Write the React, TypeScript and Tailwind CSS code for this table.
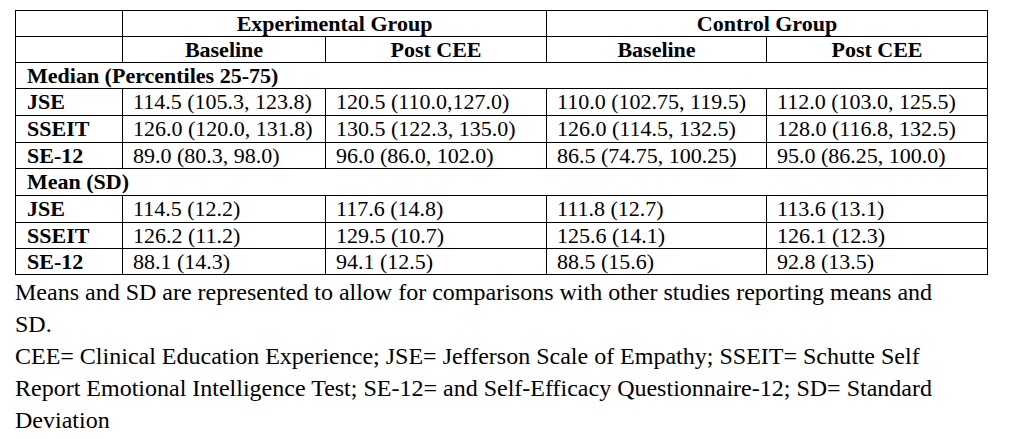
import React from "react";

const medianRows = [
  ["JSE", "114.5 (105.3, 123.8)", "120.5 (110.0,127.0)", "110.0 (102.75, 119.5)", "112.0 (103.0, 125.5)"],
  ["SSEIT", "126.0 (120.0, 131.8)", "130.5 (122.3, 135.0)", "126.0 (114.5, 132.5)", "128.0 (116.8, 132.5)"],
  ["SE-12", "89.0 (80.3, 98.0)", "96.0 (86.0, 102.0)", "86.5 (74.75, 100.25)", "95.0 (86.25, 100.0)"],
];
const meanRows = [
  ["JSE", "114.5 (12.2)", "117.6 (14.8)", "111.8 (12.7)", "113.6 (13.1)"],
  ["SSEIT", "126.2 (11.2)", "129.5 (10.7)", "125.6 (14.1)", "126.1 (12.3)"],
  ["SE-12", "88.1 (14.3)", "94.1 (12.5)", "88.5 (15.6)", "92.8 (13.5)"],
];

function DataRow({ r, h }: { r: string[]; h: string }) {
  return (
    <tr className={h}>
      <td className="border border-black pl-[11px] font-bold leading-none">{r[0]}</td>
      {r.slice(1).map((c, i) => (
        <td key={i} className="border border-black pl-[10px] leading-none whitespace-nowrap">
          {c}
        </td>
      ))}
    </tr>
  );
}

const medianHeights = ["h-[27px]", "h-[27px]", "h-[26px]"];
const meanHeights = ["h-[27px]", "h-[26px]", "h-[26px]"];

export default function App() {
  return (
    <div className="w-[1009px] h-[439px] bg-white text-black overflow-hidden font-['Liberation_Serif']">
      <div className="pt-[10px] pl-[15px]">
        <table className="border-collapse text-[22px] table-fixed w-[972px]">
          <colgroup>
            <col className="w-[107px]" />
            <col className="w-[203px]" />
            <col className="w-[221px]" />
            <col className="w-[220px]" />
            <col className="w-[221px]" />
          </colgroup>
          <tbody>
            <tr className="h-[26px]">
              <td className="border border-black"></td>
              <td colSpan={2} className="border border-black text-center font-bold leading-none">
                Experimental Group
              </td>
              <td colSpan={2} className="border border-black text-center font-bold leading-none">
                Control Group
              </td>
            </tr>
            <tr className="h-[26px]">
              <td className="border border-black"></td>
              <td className="border border-black text-center font-bold leading-none">Baseline</td>
              <td className="border border-black text-center font-bold leading-none">Post CEE</td>
              <td className="border border-black text-center font-bold leading-none">Baseline</td>
              <td className="border border-black text-center font-bold leading-none">Post CEE</td>
            </tr>
            <tr className="h-[26px]">
              <td colSpan={5} className="border border-black pl-[11px] font-bold leading-none">
                Median (Percentiles 25-75)
              </td>
            </tr>
            {medianRows.map((r, i) => (
              <DataRow key={i} r={r} h={medianHeights[i]} />
            ))}
            <tr className="h-[27px]">
              <td colSpan={5} className="border border-black pl-[11px] font-bold leading-none">
                Mean (SD)
              </td>
            </tr>
            {meanRows.map((r, i) => (
              <DataRow key={i} r={r} h={meanHeights[i]} />
            ))}
          </tbody>
        </table>
        <div className="text-[24px] leading-[32px] pt-[1px] w-[972px]">
          <p>
            Means and SD are represented to allow for comparisons with other studies reporting means and
            <br />
            SD.
          </p>
          <p>
            CEE= Clinical Education Experience; JSE= Jefferson Scale of Empathy; SSEIT= Schutte Self
            <br />
            Report Emotional Intelligence Test; SE-12= and Self-Efficacy Questionnaire-12; SD= Standard
            <br />
            Deviation
          </p>
        </div>
      </div>
    </div>
  );
}
